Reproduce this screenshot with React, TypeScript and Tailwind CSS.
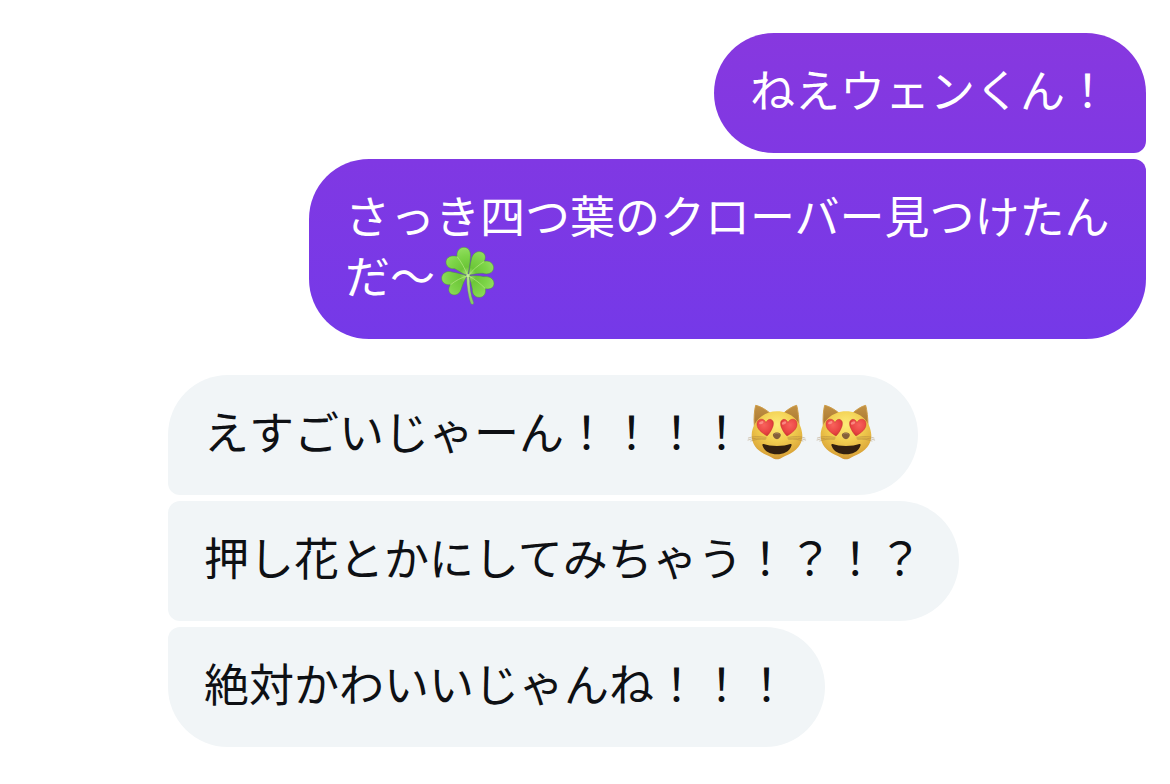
import React from 'react';

type Sender = 'me' | 'them';

interface Message {
    id: number;
    text: string;
    emoji?: EmojiName[];
}

interface MessageGroup {
    id: number;
    sender: Sender;
    messages: Message[];
}

type EmojiName = 'clover' | 'cat';

/* ─── Emoji ─── */

const EMOJI_CLASS = 'inline-block align-[-4px] w-[69px] h-[60px] -my-2';

const CloverEmoji: React.FC = () => (
    <svg viewBox="15 20 207 180" className={EMOJI_CLASS} role="img" aria-label="四つ葉のクローバー">
        <defs>
            <radialGradient id="leaf" gradientUnits="userSpaceOnUse" cx="114" cy="108" r="84">
                <stop offset="0" stopColor="#aee47a" />
                <stop offset="0.3" stopColor="#6cc638" />
                <stop offset="0.7" stopColor="#7dd448" />
                <stop offset="1" stopColor="#92de60" />
            </radialGradient>
            <linearGradient id="stem" x1="0" y1="0" x2="0" y2="1">
                <stop offset="0" stopColor="#b8e58c" />
                <stop offset="1" stopColor="#84c862" />
            </linearGradient>
        </defs>
        <path d="M110 112 C110 140 114 168 122 192 C125 197 132 196 131 190 C122 168 118 140 119 112 Z" fill="url(#stem)" stroke="#4f8950" strokeWidth="1" />
        <g fill="url(#leaf)" stroke="#4c8c42" strokeWidth="1.5" strokeLinejoin="round">
            <path d="M113 108 C99 105 86 94 74 88 C60 90 47 81 48 67 C49 53 64 47 81 51 C79 36 89 24 102 24 C117 24 123 38 121 54 C120 73 117 92 113 108 Z" />
            <path d="M116 108 C119 89 121 72 124 61 C126 46 137 35 151 37 C166 39 169 53 163 66 C178 62 191 72 191 86 C190 101 173 107 159 102 C144 101 130 105 116 108 Z" />
            <path d="M111 110 C101 127 97 139 93 151 C88 165 74 171 63 164 C54 157 55 145 61 136 C47 138 34 129 35 115 C36 101 51 93 66 98 C82 101 98 104 111 110 Z" />
            <path d="M117 110 C133 109 148 108 162 112 C177 110 192 118 192 132 C192 146 180 151 166 148 C169 161 162 174 148 174 C133 174 126 162 127 149 C124 135 121 122 117 110 Z" />
        </g>
        <g fill="none" stroke="#b9ea86" strokeWidth="2" strokeLinecap="round">
            <path d="M113 108 C104 87 95 69 82 53" />
            <path d="M116 108 C127 92 146 77 162 67" />
            <path d="M111 110 C94 115 76 124 62 136" />
            <path d="M117 110 C135 120 152 133 165 147" />
        </g>
        <circle cx="114" cy="109" r="5" fill="#c5ee99" />
    </svg>
);

const HEART_PATH = 'M5 27 C-12 16 -24 7 -25 -7 C-26 -20 -17 -25 -9 -23 C-4 -22 0 -18 2 -13 C5 -20 11 -25 18 -22 C27 -18 25 -5 20 5 C16 14 11 21 5 27 Z';

const CatEmoji: React.FC = () => (
    <svg viewBox="12 22 207 180" className={EMOJI_CLASS} role="img" aria-label="目がハートの猫">
        <defs>
            <radialGradient id="fur" cx="0.5" cy="0.28" r="0.76">
                <stop offset="0" stopColor="#fdec78" />
                <stop offset="0.45" stopColor="#f2ce50" />
                <stop offset="0.8" stopColor="#dfac3c" />
                <stop offset="1" stopColor="#cf9236" />
            </radialGradient>
            <linearGradient id="ear" x1="0" y1="0" x2="0" y2="1">
                <stop offset="0" stopColor="#c29245" />
                <stop offset="1" stopColor="#a8752f" />
            </linearGradient>
            <radialGradient id="heart" cx="0.42" cy="0.35" r="0.65">
                <stop offset="0" stopColor="#f8625c" />
                <stop offset="0.7" stopColor="#e94443" />
                <stop offset="1" stopColor="#d03434" />
            </radialGradient>
        </defs>
        {/* Ears */}
        <g fill="url(#ear)" stroke="#cf9d48" strokeWidth="3" strokeLinejoin="round">
            <path d="M47 32 C43 47 41 70 43 94 L93 58 C80 46 62 35 47 32 Z" />
            <path d="M170 32 C174 47 177 70 177 94 L128 58 C141 46 156 35 170 32 Z" />
        </g>
        {/* Face */}
        <path d="M111 50 C69 50 36 82 35 122 C35 151 54 170 78 180 C93 185 101 194 111 194 C121 194 129 185 144 180 C168 170 187 151 187 122 C186 82 153 50 111 50 Z" fill="url(#fur)" />
        {/* Whiskers */}
        <g fill="none" stroke="#97713b" strokeWidth="2" strokeLinecap="round" opacity="0.55">
            <path d="M78 128 C58 124 38 125 25 130" />
            <path d="M78 131 C59 129 40 130 24 136" />
            <path d="M76 134 C61 132 46 134 32 139" />
            <path d="M144 128 C164 124 183 125 195 130" />
            <path d="M144 131 C163 129 182 130 197 136" />
            <path d="M146 134 C161 132 176 134 189 139" />
        </g>
        {/* Heart eyes */}
        <path d={HEART_PATH} transform="translate(76 97)" fill="url(#heart)" stroke="#c93532" strokeWidth="1.5" />
        <path d={HEART_PATH} transform="translate(146 97) scale(-1 1)" fill="url(#heart)" stroke="#c93532" strokeWidth="1.5" />
        <g fill="#ff9890" opacity="0.8">
            <ellipse cx="64" cy="84" rx="7" ry="4" transform="rotate(-25 64 84)" />
            <ellipse cx="132" cy="85" rx="7" ry="4" transform="rotate(-25 132 85)" />
        </g>
        {/* Nose and mouth */}
        <path d="M99 119 C102 112 119 112 122 119 C124 126 116 133 111 134 C105 133 97 126 99 119 Z" fill="#846039" />
        <path d="M104 118 C107 115 114 115 117 118" fill="none" stroke="#b29065" strokeWidth="2" strokeLinecap="round" />
        <path d="M71 148 C81 152 95 154 111 154 C127 154 141 152 151 148 C155 147 156 150 154 154 C148 171 130 179 111 179 C92 179 74 171 68 154 C66 150 67 147 71 148 Z" fill="#33200f" />
    </svg>
);

const Emoji: React.FC<{ name: EmojiName }> = ({ name }) => (name === 'clover' ? <CloverEmoji /> : <CatEmoji />);

/* ─── Conversation ─── */

const groups: MessageGroup[] = [
    {
        id: 1,
        sender: 'me',
        messages: [
            { id: 1, text: 'ねえウェンくん！' },
            { id: 2, text: 'さっき四つ葉のクローバー見つけたんだ〜', emoji: ['clover'] },
        ],
    },
    {
        id: 2,
        sender: 'them',
        messages: [
            { id: 3, text: 'えすごいじゃーん！！！！', emoji: ['cat', 'cat'] },
            { id: 4, text: '押し花とかにしてみちゃう！？！？' },
            { id: 5, text: '絶対かわいいじゃんね！！！' },
        ],
    },
];

// Corners that touch a neighbouring bubble of the same sender are tightened
const bubbleShape = (sender: Sender, isFirst: boolean, isLast: boolean) => {
    if (sender === 'me') {
        return `${isFirst ? '' : 'rounded-tr-xl'} ${isLast ? '' : 'rounded-br-xl'}`;
    }
    return `${isFirst ? '' : 'rounded-tl-xl'} ${isLast ? '' : 'rounded-bl-xl'}`;
};

const bubbleColor = (sender: Sender, isFirst: boolean) => {
    if (sender === 'them') return 'bg-[#f1f5f7] text-[#0e1014]';
    return isFirst
        ? 'bg-linear-to-b from-[#8738df] to-[#8038e3] text-white'
        : 'bg-linear-to-b from-[#8038e3] to-[#7539e8] text-white';
};

const Bubble: React.FC<{ message: Message; sender: Sender; isFirst: boolean; isLast: boolean }> = ({
    message,
    sender,
    isFirst,
    isLast,
}) => (
    <li
        className={`w-fit max-w-[837px] px-9 pt-[26px] pb-[34px] rounded-[60px] text-[45px] leading-[60px] ${bubbleShape(sender, isFirst, isLast)} ${bubbleColor(sender, isFirst)}`}
    >
        {message.text}
        {message.emoji?.map((name, i) => <Emoji key={i} name={name} />)}
    </li>
);

const App: React.FC = () => (
    <main
        lang="ja"
        className="min-h-screen bg-white px-6 py-[33px] flex flex-col gap-9 font-['Noto_Sans_CJK_JP',sans-serif]"
    >
        {groups.map((group) => (
            <ul
                key={group.id}
                className={`flex flex-col gap-1.5 ${group.sender === 'me' ? 'items-end' : 'items-start pl-36'}`}
            >
                {group.messages.map((message, i) => (
                    <Bubble
                        key={message.id}
                        message={message}
                        sender={group.sender}
                        isFirst={i === 0}
                        isLast={i === group.messages.length - 1}
                    />
                ))}
            </ul>
        ))}
    </main>
);

export default App;
